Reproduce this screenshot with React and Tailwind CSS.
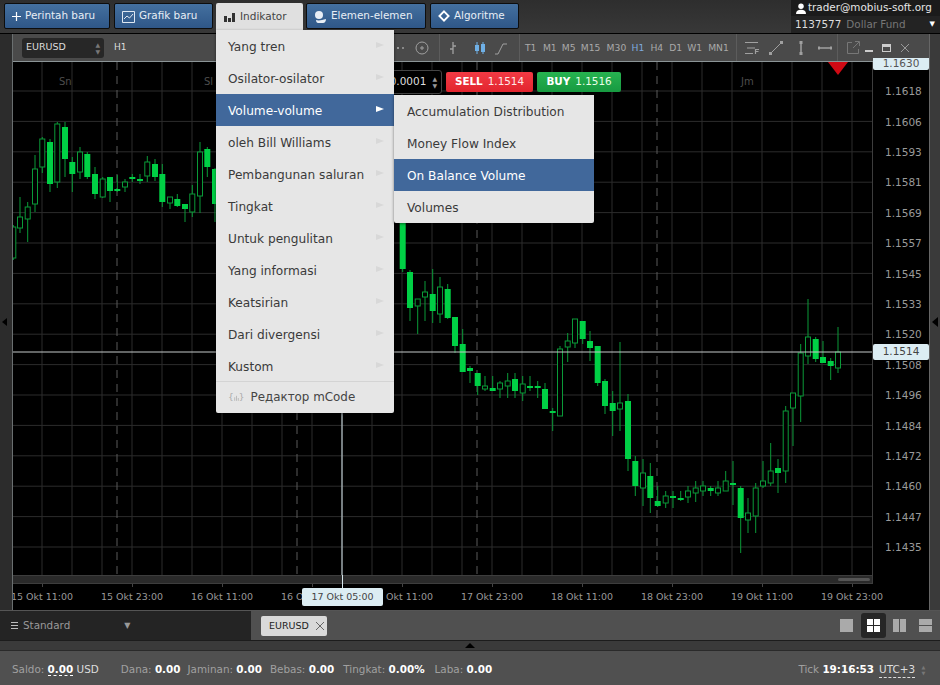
// candles as read off the chart: [x, wickTop, wickBottom, bodyTop, bodyBottom, filled]
const left = [
  [13.3,225,260,227,258,0],[20,197,233,217,228,0],[27.7,202,242,207,219,0],[35,155,212,169,204,0],[42.3,137,173,139,167,0],
  [50,139,192,142,184,1],[57.3,122,188,124,182,0],[65,122,177,127,159,1],[72.3,157,192,162,174,1],[80,147,179,152,172,0],
  [87.3,152,179,154,177,1],[95,167,199,174,194,1],[102.7,177,198,179,197,0],[110,177,202,177,191,1],[117.3,175,192,189,191,1],
  [125,179,192,182,187,0],[132.3,174,182,177,179,1],[140,174,184,179,180,1],[147.3,156,182,162,176,0],[155,159,181,164,177,1],
  [162.3,164,207,174,202,1],[170,197,209,197,203,0],[177.3,194,207,199,206,1],[185,204,222,204,209,1],[192.3,185,217,194,212,0],
  [200,142,213,152,196,0],[207.3,147,177,149,167,1],[215,168,222,169,204,1],
]
const right = [
  [402.7,200,272,200,269,1],[410,270,321,272,308,1],[417.7,299,334,299,306,0],[425,281,321,292,297,0],[432.7,269,323,294,311,1],
  [440,277,323,287,314,0],[447.7,284,319,289,318,1],[455,317,353,317,346,1],[462.7,329,372,344,372,1],[470,366,383,368,371,1],
  [477.7,373,395,373,386,1],[485,376,391,386,389,0],[492.7,376,391,388,391,1],[500,381,398,383,389,0],[507.7,373,398,381,386,0],
  [515,373,398,379,391,1],[522.7,376,401,384,393,0],[530,376,391,386,388,1],[537.7,381,398,386,388,1],[545,383,409,389,409,1],
  [552.7,408,431,411,413,1],[560,346,416,349,416,0],[567.7,333,362,341,347,0],[575,319,348,319,343,0],[582.7,321,344,321,339,1],
  [590,331,361,341,348,1],[597.7,346,386,346,383,1],[605,379,414,381,406,1],[612.7,391,436,403,411,1],[620,342,431,403,409,0],
  [628,394,471,401,459,1],[635.3,456,496,461,486,1],[643,459,506,473,488,0],[650.3,463,513,476,498,1],[657.7,486,507,501,506,1],
  [665.7,491,508,496,503,0],[673,491,508,496,498,1],[680.7,491,501,498,500,1],[688,486,503,491,497,0],[695.7,481,502,488,493,0],
  [703,481,496,486,491,0],[710.7,486,496,488,491,1],[718,481,496,488,493,0],[725.7,471,491,481,491,0],[733,461,505,483,485,1],
  [740.7,486,553,488,518,1],[748,498,533,513,520,0],[755.7,483,533,488,516,0],[763,461,488,481,486,0],[770.7,443,486,471,483,0],
  [778,459,493,468,473,1],[785.7,406,483,411,471,0],[793,393,446,393,408,0],[800.7,344,422,353,396,0],[808,299,364,337,356,0],
  [815.7,337,362,339,359,1],[823,341,363,357,363,1],[830.7,358,380,361,366,1],[838,327,373,352,368,0],
]
const candles = [...left, ...right]

const gridX = Array.from({ length: 28 }, (_, i) => 42 + i * 30)
const gridY = Array.from({ length: 17 }, (_, i) => 91 + i * 30.4)
const dashed = [117, 297, 477, 657]
const prices = ['1.1618','1.1606','1.1593','1.1581','1.1569','1.1557','1.1545','1.1533','1.1520','1.1508','1.1496','1.1484','1.1472','1.1460','1.1447','1.1435']
const times = ['15 Okt 11:00','15 Okt 23:00','16 Okt 11:00','16 Okt 23:00','17 Okt 11:00','17 Okt 23:00','18 Okt 11:00','18 Okt 23:00','19 Okt 11:00','19 Okt 23:00']
const frames = [['T1',18],['M1',19],['M5',19],['M15',26],['M30',25],['H1',19],['H4',19],['D1',18],['W1',21],['MN1',28]]
const mainMenu = ['Yang tren','Osilator-osilator','Volume-volume','oleh Bill Williams','Pembangunan saluran','Tingkat','Untuk pengulitan','Yang informasi','Keatsirian','Dari divergensi','Kustom']
const subMenu = ['Accumulation Distribution','Money Flow Index','On Balance Volume','Volumes']

function Chart() {
  return (
    <svg width="860" height="513" viewBox="12 62 860 513" className="block bg-black">
      {gridX.map(x => <line key={x} x1={x} x2={x} y1="62" y2="575" stroke="#2c2c2c" />)}
      {gridY.map(y => <line key={y} x1="12" x2="872" y1={y} y2={y} stroke="#2c2c2c" />)}
      {dashed.map(x => <line key={x} x1={x} x2={x} y1="62" y2="575" stroke="#5a5a5a" strokeDasharray="8 6" />)}
      <text x="59" y="85" fill="#4d4d4d" fontSize="10">Sn</text>
      <text x="204" y="85" fill="#4d4d4d" fontSize="10">Sl</text>
      <text x="741" y="85" fill="#4d4d4d" fontSize="10">Jm</text>
      {candles.map(([x, hi, lo, top, bot, filled]) => (
        <g key={x}>
          <line x1={x} x2={x} y1={hi} y2={lo} stroke="#0a9a38" />
          {filled ? (
            <rect x={x - 3} y={top} width="6" height={Math.max(bot - top, 2)} fill="#00d045" />
          ) : (
            <rect x={x - 2.5} y={top} width="5" height={bot - top} fill="#000" stroke="#0a9a38" />
          )}
        </g>
      ))}
      <line x1="12" x2="872" y1="352" y2="352" stroke="#c4c9c9" />
      <line x1="342" x2="342" y1="62" y2="575" stroke="#d8e8ee" />
      <polygon points="828,62 848,62 838,75" fill="#d00a14" />
    </svg>
  )
}

function ToolIcon({ children }) {
  return (
    <svg width="16" height="16" viewBox="0 0 16 16" fill="none" stroke="#a0a0a0" className="shrink-0">
      {children}
    </svg>
  )
}

function NavButton({ icon, label, width }) {
  return (
    <button className={`${width} h-[26px] flex items-center gap-[4px] pl-[7px] rounded-[2px] border border-[#0d0d0d] bg-gradient-to-b from-[#44709f] to-[#2f5788] text-[#e8eef5] text-[10.4px] whitespace-nowrap`}>
      {icon}
      {label}
    </button>
  )
}

export default function App() {
  return (
    <div className="relative w-[940px] h-[685px] overflow-hidden flex flex-col bg-[#333] font-['DejaVu_Sans',sans-serif]">
      {/* top bar */}
      <div className="h-[34px] flex shrink-0 pl-1 bg-gradient-to-b from-[#2e2e2e] to-[#383838] border-b border-black">
        <div className="flex items-start gap-1 pt-[3px]">
          <NavButton width="w-[106px]" label="Perintah baru" icon={
            <svg width="9" height="9" viewBox="0 0 9 9" stroke="#fff" strokeWidth="1.2"><path d="M4.500 0v9M0 4.500h9" /></svg>
          } />
          <NavButton width="w-[99px]" label="Grafik baru" icon={
            <svg width="13" height="13" viewBox="0 0 13 13" fill="none" stroke="#dfe8f2"><path d="M.5 1.5h12v11H.5z" /><path d="M2 9l3-3 2.500 2L11 4" /></svg>
          } />
          <div className="w-[87px] h-[27px] -ml-px -mr-px flex items-center gap-[5px] pl-2 bg-[#e0e0e0] rounded-t-[2px] text-[#444] text-[10.5px]">
            <svg width="11" height="10" viewBox="0 0 11 10" fill="#333"><path d="M0 4h3v6H0zM4 6h3v4H4zM8 1h3v9H8z" /></svg>
            Indikator
          </div>
          <NavButton width="w-[120px]" label="Elemen-elemen" icon={
            <svg width="13" height="13" viewBox="0 0 13 13" fill="#e8eef5"><circle cx="5" cy="5" r="4" /><path d="M2 10c3 1 6 0 10-1 0 2-1 4-3 4H4c-1 0-2-1-2-3z" /></svg>
          } />
          <NavButton width="w-[89px]" label="Algoritme" icon={
            <svg width="12" height="12" viewBox="0 0 13 13" fill="none" stroke="#fff" strokeWidth="2"><path d="M6.500 1.500l5 5-5 5-5-5z" /></svg>
          } />
        </div>
        <div className="ml-auto w-[149px] flex flex-col text-[10.4px]">
          <div className="h-4 bg-[#1b1b1b] flex items-center gap-[2px] pl-[5px] text-[#e6e6e6] whitespace-nowrap">
            <svg width="10" height="11" viewBox="0 0 11 12" fill="#fff"><circle cx="5.500" cy="3.500" r="3" /><path d="M0 12c0-3 2-4.500 5.500-4.500S11 9 11 12z" /></svg>
            trader@mobius-soft.org
          </div>
          <div className="flex-1 bg-[#232323] flex items-center pl-[4px] pr-[5px]">
            <span className="text-[#ddd] mr-[5px]">1137577</span>
            <span className="text-[#777]">Dollar Fund</span>
            <span className="ml-auto text-white text-[7px]">▼</span>
          </div>
        </div>
      </div>

      {/* chart window with gutters */}
      <div className="h-[576px] flex shrink-0">
        <div className="w-3 flex items-center bg-[#2c2c2c]">
          <span className="w-0 h-0 ml-[2px] border-y-[4px] border-y-transparent border-r-[5px] border-r-black" />
        </div>
        <div className="w-[917px] flex flex-col overflow-hidden border-l border-[#6a6f70]">
          <div className="h-[28px] flex items-center bg-[#4a4a4a] border-b border-[#8b9496] text-[9.5px] text-[#aaa] shrink-0">
            <div className="ml-[9px] w-[82px] h-5 flex items-center justify-between px-[4px] rounded-[3px] bg-[#272727] text-[#ddd]">
              EURUSD
              <span className="text-[6px] leading-[7px] text-[#777] text-center">▲<br />▼</span>
            </div>
            <span className="ml-[10px] text-[#ddd] text-[9px]">H1</span>

            <div className="ml-auto flex items-center h-full">
              <div className="w-[44px] flex items-center justify-end gap-[3px] pr-[1px]">
                <span className="w-[2px] h-[2px] bg-[#ddd]" />
                <span className="w-[2px] h-[2px] bg-[#bbb]" />
                <span className="w-[2px] h-[2px] bg-[#999]" />
                <span className="w-[2px] h-[2px] bg-[#888]" />
              </div>
              <div className="w-[34px] flex justify-center">
                <ToolIcon><circle cx="8" cy="8" r="6" /><path d="M8 6v4M6 8h4" /></ToolIcon>
              </div>
              <div className="h-full w-[27px] border-l border-[#5c5c5c] flex items-center justify-center">
                <ToolIcon><path d="M8 2v12M5 9h3M8 6h3" strokeWidth="1.3" /></ToolIcon>
              </div>
              <div className="w-[27px] flex justify-center">
                <svg width="12" height="16" viewBox="0 0 12 16"><path d="M3 2v12M9 2v12" stroke="#6fb0e6" /><rect x="1" y="5" width="4" height="6" fill="#6fb0e6" /><rect x="7" y="4" width="4" height="8" fill="#6fb0e6" /></svg>
              </div>
              <div className="w-[26px] flex justify-start">
                <ToolIcon><path d="M2 14h3l5-10h4" /></ToolIcon>
              </div>
              <div className="h-full w-[218px] pl-[5px] border-x border-[#5c5c5c] flex items-center text-[9.2px] text-[#a9a9a9]">
                {frames.map(([name, w]) => (
                  <span key={name} style={{ width: w }} className={name === 'H1' ? 'text-[#7ea9dd]' : ''}>{name}</span>
                ))}
              </div>
              <div className="w-[101px] h-full flex items-center pl-[7px] border-r border-[#5c5c5c]">
                <ToolIcon><path d="M1 2.500h13M3 8h8M1 13.500h8" /><path d="M11.500 14V9.500H15M11.500 11.500h3" strokeWidth="1.200" /></ToolIcon>
                <div className="ml-2"><ToolIcon><path d="M3 13l10-10" /><path d="M1 12h3v3H1zM12 1h3v3h-3z" fill="#a0a0a0" stroke="none" /></ToolIcon></div>
                <div className="ml-[9px]"><ToolIcon><path d="M8 3v10" strokeWidth="1.500" /><path d="M6.500 1h3v3h-3zM6.500 12h3v3h-3z" fill="#a0a0a0" stroke="none" /></ToolIcon></div>
                <div className="ml-2"><ToolIcon><path d="M2 8h12" strokeWidth="1.500" /><path d="M1 6.500h2v3H1zM13 6.500h2v3h-2z" fill="#a0a0a0" stroke="none" /></ToolIcon></div>
              </div>
              <div className="w-[91px] flex items-center pl-[7px]">
                <ToolIcon><path d="M7 2.500H2.500v11h11V9" stroke="#777" /><path d="M8 8l6-6M10 1.500h4.500V6" stroke="#777" /></ToolIcon>
                <span className="ml-[4px] w-[8px] h-[2px] mt-[6px] bg-[#ccc]" />
                <span className="ml-[9px] w-[9px] h-[8px] border border-t-[3px] border-[#ccc]" />
                <svg width="10" height="10" viewBox="0 0 10 10" stroke="#999" className="ml-[9px]"><path d="M1 1l8 8M9 1l-8 8" /></svg>
              </div>
            </div>
          </div>

          <div className="h-[522px] flex shrink-0">
            <div className="w-[859px] flex flex-col overflow-hidden">
              <div className="-ml-px h-[513px] shrink-0"><Chart /></div>
              <div className="flex-1 flex items-center justify-end pr-[2px] bg-[#2a2a2a] border-y border-[#3d3d3d]">
                <span className="w-8 h-[3px] rounded-sm bg-[#555]" />
              </div>
            </div>
            <div className="w-[57px] flex flex-col pt-[15px] bg-black border-l border-[#3d3d3d] text-[10.5px] text-[#9a9a9a]">
              {prices.map(p => (
                <div key={p} className="h-[30.4px] shrink-0 flex items-center pl-[12px]">{p}</div>
              ))}
            </div>
          </div>

          <div className="flex-1 flex bg-black text-[9.5px] text-[#999]">
            <div className="flex -ml-[16px]">
              {times.map(t => (
                <div key={t} className="w-[90px] shrink-0 flex flex-col items-center whitespace-nowrap">
                  <span className="w-px h-[3px] bg-[#444]" />
                  <span className="mt-[3px] leading-[14px]">{t}</span>
                </div>
              ))}
            </div>
          </div>
        </div>
        <div className="w-[11px] flex items-center justify-end bg-[#3a3a3a] border-l border-[#666]">
          <span className="w-0 h-0 mr-[2px] border-y-[5px] border-y-transparent border-r-[6px] border-r-black" />
        </div>
      </div>

      {/* tabs row */}
      <div className="h-[31px] flex shrink-0 bg-[#505050] border-t border-[#555] border-b border-b-[#1c1c1c]">
        <div className="w-[251px] flex items-center bg-[#242424] pl-[11px] text-[10.4px] text-[#999]">
          <svg width="7" height="7" viewBox="0 0 7 7" stroke="#bbb"><path d="M0 .5h7M0 3.500h7M0 6.500h7" /></svg>
          <span className="ml-[5px]">Standard</span>
          <span className="ml-[54px] text-[8px] text-[#999]">▼</span>
        </div>
        <div className="ml-[10px] mt-[5px] w-[66px] h-5 flex items-center gap-[7px] pl-2 rounded-[2px] bg-[#d9d9d9] text-[#222] text-[9.5px] font-medium">
          EURUSD
          <svg width="8" height="8" viewBox="0 0 8 8" stroke="#666"><path d="M0 0l8 8M8 0L0 8" /></svg>
        </div>
        <div className="ml-auto mr-2 flex items-center">
          <span className="w-[13px] h-[13px] bg-[#aaa]" />
          <div className="ml-2 w-[25px] h-[25px] rounded-[3px] bg-[#262626] grid grid-cols-2 gap-px p-[6px]">
            <span className="bg-white" /><span className="bg-white" /><span className="bg-white" /><span className="bg-white" />
          </div>
          <div className="ml-[7px] w-[13px] h-[13px] grid grid-cols-2 gap-px"><span className="bg-[#aaa]" /><span className="bg-[#aaa]" /></div>
          <div className="ml-[13px] w-[13px] h-[13px] flex flex-col gap-px"><span className="flex-1 bg-[#aaa]" /><span className="flex-1 bg-[#aaa]" /></div>
        </div>
      </div>

      {/* status */}
      <div className="h-[10px] shrink-0 flex justify-center items-center bg-[#3a3a3a] border-b border-[#2a2a2a]">
        <span className="w-0 h-0 border-x-[5px] border-x-transparent border-b-[5px] border-b-black" />
      </div>
      <div className="flex-1 flex items-center pt-1 pl-3 pr-[13px] bg-[#505050] text-[10.4px] text-[#a0a0a0] whitespace-nowrap">
        <span>Saldo: <b className="text-white border-b border-dashed border-white">0.00</b> <span className="text-[#ddd]">USD</span></span>
        <span className="ml-[22px]">Dana: <b className="text-white">0.00</b></span>
        <span className="ml-[7px]">Jaminan: <b className="text-white">0.00</b></span>
        <span className="ml-2">Bebas: <b className="text-white">0.00</b></span>
        <span className="ml-[9px]">Tingkat: <b className="text-white">0.00%</b></span>
        <span className="ml-[10px]">Laba: <b className="text-white">0.00</b></span>
        <span className="ml-auto">Tick <b className="text-white">19:16:53</b></span>
        <span className="ml-[5px] text-[#ddd] border-b border-dashed border-[#ddd]">UTC+3</span>
        <span className="ml-[5px] w-[7px] text-[5px] leading-[6px] text-[#777] text-center">▲<br />▼</span>
      </div>

      {/* overlays: labels on the chart */}
      <div className="absolute left-[873px] top-[58px] w-[56px] h-3 flex items-center justify-center rounded-b-[2px] bg-[#dcedf3] text-[10.5px] text-[#555] overflow-hidden">1.1630</div>
      <div className="absolute left-[873px] top-[344px] w-[56px] h-4 flex items-center justify-center rounded-[2px] bg-[#dcedf3] text-[10.5px] text-[#444]">1.1514</div>
      <div className="absolute left-[302px] top-[588px] w-[81px] h-[18px] flex items-center justify-center rounded-[2px] bg-[#dcedf3] text-[9.5px] text-[#444]">17 Okt 05:00</div>
      <div className="absolute left-[342px] top-[575px] w-px h-[13px] bg-[#d8e8ee]" />

      {/* order panel on the chart */}
      <div className="absolute left-[385px] top-[70px] w-[57px] h-6 flex items-center justify-end pr-[4px] rounded-[3px] bg-black border border-[#444] text-[10.5px] text-[#ddd]">
        0.0001
        <span className="ml-[6px] text-[6px] leading-[7px] text-[#999] text-center">▲<br />▼</span>
      </div>
      <div className="absolute left-[446px] top-[72px] w-[87px] h-5 flex items-center justify-center gap-[5px] rounded-[2px] bg-gradient-to-b from-[#f23a44] to-[#e2242e] text-[10.4px] text-[#ffe8e8]">
        <b className="text-white">SELL</b> 1.1514
      </div>
      <div className="absolute left-[537px] top-[72px] w-[84px] h-5 flex items-center justify-center gap-[5px] rounded-[2px] bg-gradient-to-b from-[#27b350] to-[#179a41] text-[10.4px] text-[#e8ffe8]">
        <b className="text-white">BUY</b> 1.1516
      </div>

      {/* indicator menu */}
      <div className="absolute left-[216px] top-[30px] w-[178px] bg-[#e6e6e6] shadow-[0_1px_3px_rgba(0,0,0,0.5)] rounded-b-[2px] text-[12.15px] text-[#3a3a3a]">
        {mainMenu.map(item => {
          const active = item === 'Volume-volume'
          return (
            <div key={item} className={`h-8 flex items-center justify-between pl-3 pr-[10px] whitespace-nowrap ${active ? 'bg-[#41689b] text-white' : ''}`}>
              <span className="pt-[2px]">{item}</span>
              <span className={`w-0 h-0 mb-[2px] border-y-[3.5px] border-y-transparent border-l-[8px] ${active ? 'border-l-white' : 'border-l-[#d8d8d8]'}`} />
            </div>
          )
        })}
        <div className="h-8 -mt-px flex items-center gap-[6px] pl-3 border-t border-[#d4d4d4] text-[11.9px] text-[#444]">
          <span className="flex items-center text-[#aaa] text-[9px] leading-none">{'{'}
            <svg width="5" height="8" viewBox="0 0 7 8" stroke="#aaa"><path d="M1 3v5M3.500 1v7M6 4v4" /></svg>
            {'}'}</span>
          Редактор mCode
        </div>
      </div>
      <div className="absolute left-[394px] top-[95px] w-[200px] bg-[#e6e6e6] shadow-[0_1px_3px_rgba(0,0,0,0.5)] rounded-b-[2px] text-[12.15px] text-[#3a3a3a]">
        {subMenu.map(item => (
          <div key={item} className={`h-8 flex items-center pl-[13px] pt-[3px] whitespace-nowrap ${item === 'On Balance Volume' ? 'bg-[#41689b] text-white' : ''}`}>{item}</div>
        ))}
      </div>
    </div>
  )
}
